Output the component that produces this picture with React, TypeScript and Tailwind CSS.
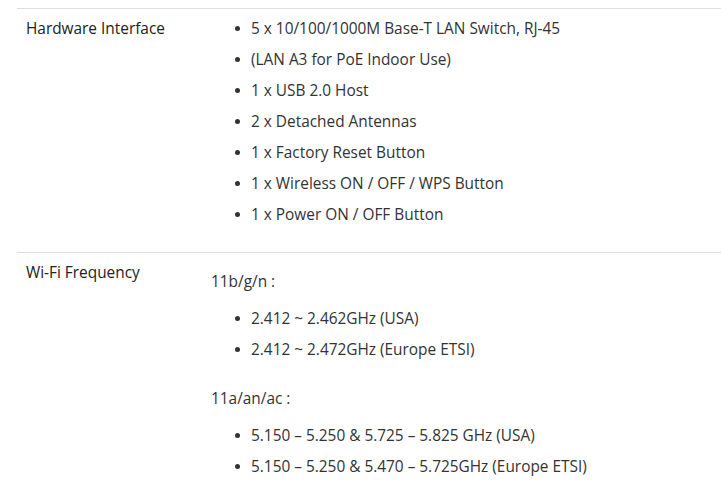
const hardware = [
  "5 x 10/100/1000M Base-T LAN Switch, RJ-45",
  "(LAN A3 for PoE Indoor Use)",
  "1 x USB 2.0 Host",
  "2 x Detached Antennas",
  "1 x Factory Reset Button",
  "1 x Wireless ON / OFF / WPS Button",
  "1 x Power ON / OFF Button",
]

const bands = [
  { name: "11b/g/n :", items: ["2.412 ~ 2.462GHz (USA)", "2.412 ~ 2.472GHz (Europe ETSI)"] },
  {
    name: "11a/an/ac :",
    items: ["5.150 – 5.250 & 5.725 – 5.825 GHz (USA)", "5.150 – 5.250 & 5.470 – 5.725GHz (Europe ETSI)"],
  },
]

function Bullets({ items }: { items: string[] }) {
  return (
    <ul className="flex flex-col">
      {items.map((t) => (
        <li key={t} className="flex items-center h-[31px]">
          <span className="w-[5px] h-[5px] rounded-full bg-[#333] ml-[33px] mr-[11px]" />
          <span>{t}</span>
        </li>
      ))}
    </ul>
  )
}

export default function App() {
  return (
    <div className="w-[721px] h-[496px] bg-white overflow-hidden pt-2 pl-[17px] text-[15.4px] text-[#333] font-['Open_Sans',sans-serif]">
      <div className="border-t border-[#ddd] flex pt-[4px] pb-[22px]">
        <div className="w-[185px] pl-[9px] h-[31px] flex items-center text-[#222]">Hardware Interface</div>
        <Bullets items={hardware} />
      </div>
      <div className="border-t border-[#ddd] flex pt-[4px]">
        <div className="w-[185px] pl-[9px] h-[31px] flex items-center text-[#222]">Wi-Fi Frequency</div>
        <div className="flex flex-col pt-[9px] pl-[9px]">
          {bands.map((b) => (
            <div key={b.name} className="flex flex-col mb-[18px]">
              <div className="h-[31px] flex items-center">{b.name}</div>
              <div className="pt-[6px] -ml-[9px]">
                <Bullets items={b.items} />
              </div>
            </div>
          ))}
        </div>
      </div>
    </div>
  )
}
